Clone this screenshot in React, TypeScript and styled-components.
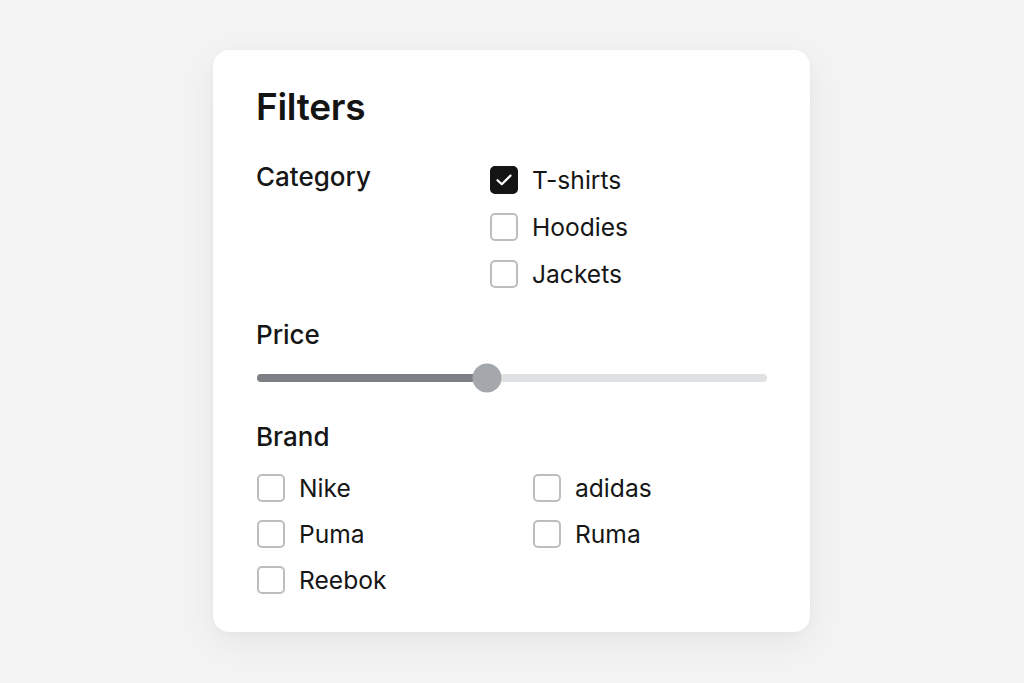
import React from "react";
import styled, { createGlobalStyle } from "styled-components";

const Global = createGlobalStyle`
  html, body { margin: 0; padding: 0; }
  body {
    background: #f3f3f3;
    font-family: Inter, "Noto Sans", "Liberation Sans", sans-serif;
    color: #151515;
  }
`;

const Page = styled.div`
  width: 1024px;
  height: 683px;
  display: flex;
  justify-content: center;
  align-items: flex-start;
  padding-top: 50px;
  box-sizing: border-box;
`;

const Card = styled.section`
  width: 597px;
  height: 582px;
  box-sizing: border-box;
  background: #ffffff;
  border-radius: 16px;
  box-shadow: 0 10px 34px rgba(0, 0, 0, 0.06), 0 1px 4px rgba(0, 0, 0, 0.03);
  padding: 34px 43px 0 43px;
  display: flex;
  flex-direction: column;
  margin-left: -1px;
`;

const Title = styled.h1`
  margin: 0;
  font-size: 37px;
  line-height: 46px;
  font-weight: 600;
  letter-spacing: -0.3px;
  color: #141414;
`;

const Label = styled.div`
  font-size: 26px;
  line-height: 30px;
  font-weight: 500;
  color: #161616;
`;

const CategoryRow = styled.div`
  margin-top: 32px;
  display: grid;
  grid-template-columns: 234px 1fr;
`;

const OptionList = styled.div`
  display: flex;
  flex-direction: column;
  gap: 19px;
  padding-top: 4px;
`;

const Option = styled.label`
  display: flex;
  align-items: center;
  gap: 14px;
  height: 28px;
  font-size: 24.6px;
  color: #161616;
`;

const Box = styled.span<{ $checked?: boolean }>`
  width: 28px;
  height: 28px;
  box-sizing: border-box;
  border-radius: 5px;
  border: 2px solid ${(p) => (p.$checked ? "#141414" : "#bdbdbd")};
  background: ${(p) => (p.$checked ? "#141414" : "#ffffff")};
  display: flex;
  align-items: center;
  justify-content: center;
  flex-shrink: 0;
`;

const Section = styled.div<{ $top: number }>`
  margin-top: ${(p) => p.$top}px;
  display: flex;
  flex-direction: column;
`;

const Track = styled.div`
  position: relative;
  margin-top: 24px;
  margin-left: 1px;
  width: 510px;
  height: 8px;
  border-radius: 4px;
  background: #e0e1e3;
`;

const Fill = styled.div`
  height: 100%;
  border-radius: 4px;
  background: #7c7f83;
`;

const Thumb = styled.div`
  position: absolute;
  top: 50%;
  width: 29px;
  height: 29px;
  border-radius: 50%;
  background: #a4a7ac;
  transform: translate(-50%, -50%);
`;

const BrandGrid = styled.div`
  margin-top: 22px;
  margin-left: 1px;
  display: grid;
  grid-template-columns: 276px 1fr;
  row-gap: 18px;
`;

const Check = () => (
  <svg width="16" height="12" viewBox="0 0 16 12" fill="none">
    <path d="M1.5 6.2 L5.8 10.3 L14.5 1.6" stroke="#fff" strokeWidth="2.2" strokeLinecap="round" strokeLinejoin="round" />
  </svg>
);

const Checkbox = ({ label, checked }: { label: string; checked?: boolean }) => (
  <Option>
    <Box $checked={checked}>{checked && <Check />}</Box>
    {label}
  </Option>
);

const price = 45;

export default function App() {
  return (
    <>
      <Global />
      <Page>
        <Card>
          <Title>Filters</Title>
          <CategoryRow>
            <Label>Category</Label>
            <OptionList>
              <Checkbox label="T-shirts" checked />
              <Checkbox label="Hoodies" />
              <Checkbox label="Jackets" />
            </OptionList>
          </CategoryRow>
          <Section $top={32}>
            <Label>Price</Label>
            <Track>
              <Fill style={{ width: `${price}%` }} />
              <Thumb style={{ left: `${price}%` }} />
            </Track>
          </Section>
          <Section $top={40}>
            <Label>Brand</Label>
            <BrandGrid>
              <Checkbox label="Nike" />
              <Checkbox label="adidas" />
              <Checkbox label="Puma" />
              <Checkbox label="Ruma" />
              <Checkbox label="Reebok" />
            </BrandGrid>
          </Section>
        </Card>
      </Page>
    </>
  );
}
